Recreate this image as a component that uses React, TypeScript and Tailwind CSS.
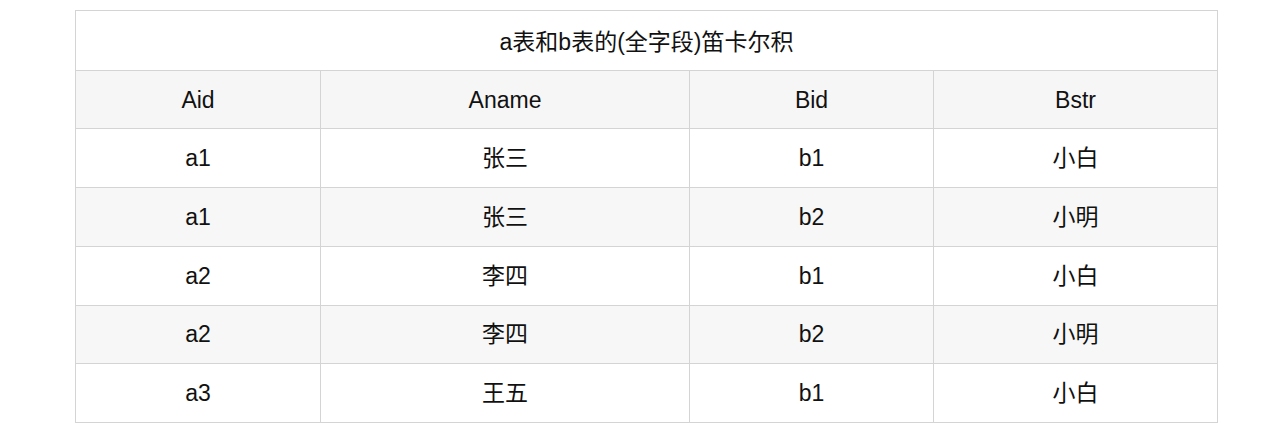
import React from "react";

const rows: [string, string, string, string][] = [
  ["a1", "张三", "b1", "小白"],
  ["a1", "张三", "b2", "小明"],
  ["a2", "李四", "b1", "小白"],
  ["a2", "李四", "b2", "小明"],
  ["a3", "王五", "b1", "小白"],
];

const heights = ["h-[59px]", "h-[59px]", "h-[59px]", "h-[58px]", "h-[59px]"];

export default function App() {
  return (
    <div
      className="w-[1280px] h-[424px] bg-white pt-[10px] pl-[75px] text-[#111111]"
      style={{ fontFamily: '"Liberation Sans", "Noto Sans CJK SC", Arial, sans-serif' }}
    >
      <div className="w-[1143px] border-r border-b border-[#d4d4d4]">
        <div className="h-[60px] border-l border-t border-[#d4d4d4] flex items-center justify-center pt-[3px] text-[23px] bg-white">
          a表和b表的(全字段)笛卡尔积
        </div>
        <div className="grid grid-cols-[245px_369px_244px_284px] h-[58px] bg-[#f6f6f6] text-[23px]">
          {["Aid", "Aname", "Bid", "Bstr"].map((h) => (
            <div key={h} className="border-l border-t border-[#d4d4d4] flex items-center justify-center pt-[1px]">
              {h}
            </div>
          ))}
        </div>
        {rows.map((r, i) => (
          <div
            key={i}
            className={`grid grid-cols-[245px_369px_244px_284px] ${heights[i]} text-[23px] ${
              i % 2 === 1 ? "bg-[#f7f7f7]" : "bg-white"
            }`}
          >
            {r.map((c, j) => (
              <div key={j} className="border-l border-t border-[#d4d4d4] flex items-center justify-center">
                {c}
              </div>
            ))}
          </div>
        ))}
      </div>
    </div>
  );
}
